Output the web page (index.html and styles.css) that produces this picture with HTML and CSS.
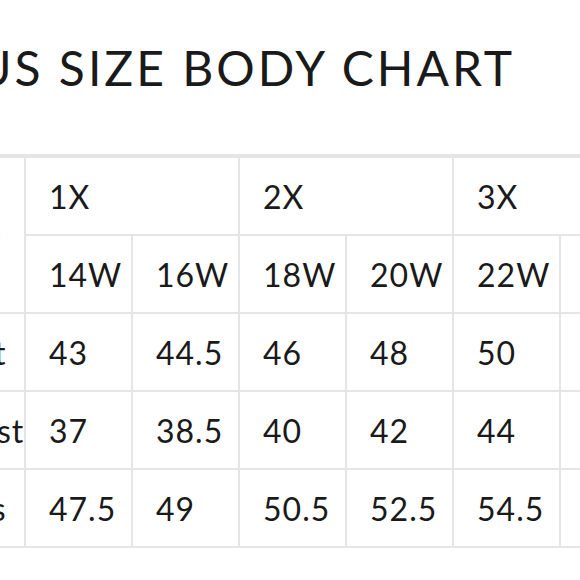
FILE: index.html
```html
<!DOCTYPE html>
<html lang="en">
<head>
<meta charset="utf-8">
<title>Plus Size Body Chart</title>
<link rel="stylesheet" href="styles.css">
</head>
<body>
<div class="page">
  <h1 class="title">PLUS SIZE BODY CHART</h1>
  <table class="chart">
    <colgroup>
      <col class="c-label">
      <col class="c-size"><col class="c-size"><col class="c-size"><col class="c-size"><col class="c-size"><col class="c-size">
    </colgroup>
    <tbody>
      <tr>
        <td class="label" rowspan="2">Size</td>
        <td colspan="2">1X</td>
        <td colspan="2">2X</td>
        <td colspan="2">3X</td>
      </tr>
      <tr>
        <td>14W</td><td>16W</td><td>18W</td><td>20W</td><td>22W</td><td>24W</td>
      </tr>
      <tr>
        <td class="label">Bust</td>
        <td>43</td><td>44.5</td><td>46</td><td>48</td><td>50</td><td>52</td>
      </tr>
      <tr>
        <td class="label">Waist</td>
        <td>37</td><td>38.5</td><td>40</td><td>42</td><td>44</td><td>46</td>
      </tr>
      <tr>
        <td class="label">Hips</td>
        <td>47.5</td><td>49</td><td>50.5</td><td>52.5</td><td>54.5</td><td>56.5</td>
      </tr>
    </tbody>
  </table>
</div>
</body>
</html>
```
FILE: styles.css
```css
html, body {
  margin: 0;
  padding: 0;
  background: #ffffff;
  overflow: hidden;
}

.page {
  width: 1000px;
  margin-left: -127px;
  font-family: Lato, "Open Sans", "Liberation Sans", sans-serif;
  color: #1a1a1a;
}

.title {
  margin: 0 0 0 45px;
  padding: 39px 0 0 0;
  font-size: 48px;
  font-weight: 400;
  letter-spacing: 3px;
  line-height: 58px;
  height: 115px;
  white-space: nowrap;
}

.chart {
  border-collapse: collapse;
  table-layout: fixed;
  width: 793px;
  font-size: 32px;
  letter-spacing: 1px;
}

.c-label { width: 151px; }
.c-size { width: 107px; }

.chart td {
  border: 2px solid #e5e5e5;
  height: 76px;
  padding: 0 0 0 23px;
  vertical-align: middle;
  white-space: nowrap;
}

.chart tr:first-child td {
  border-top: 4px solid #e5e5e5;
}

.chart td.label {
  padding-left: 64px;
}

.chart tr:first-child td.label {
  padding-left: 67px;
}
```
